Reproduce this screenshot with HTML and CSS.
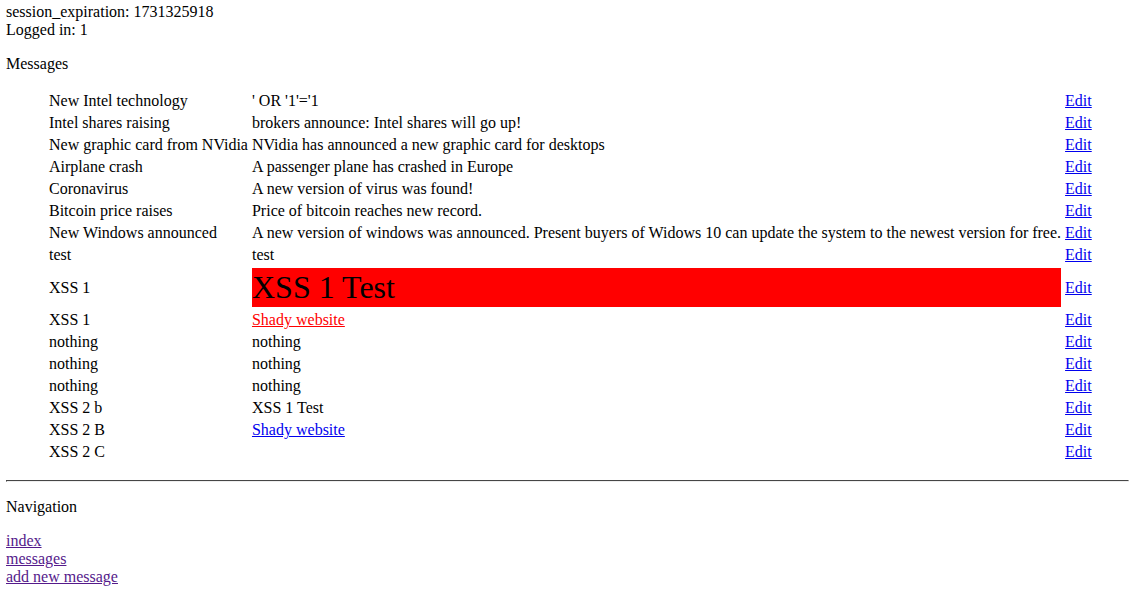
FILE: index.html
```html
<!DOCTYPE html>
<html>
<head>
<meta charset="utf-8">
<title>Messages</title>
<link rel="stylesheet" href="styles.css">
</head>
<body>
<div class="session">session_expiration: 1731325918<br>Logged in: 1</div>
<p class="heading">Messages</p>
<blockquote class="messages">
<table class="msg-table">
<tr><td>New Intel technology</td><td>' OR '1'='1</td><td><a href="#" class="edit">Edit</a></td></tr>
<tr><td>Intel shares raising</td><td>brokers announce: Intel shares will go up!</td><td><a href="#" class="edit">Edit</a></td></tr>
<tr><td>New graphic card from NVidia</td><td>NVidia has announced a new graphic card for desktops</td><td><a href="#" class="edit">Edit</a></td></tr>
<tr><td>Airplane crash</td><td>A passenger plane has crashed in Europe</td><td><a href="#" class="edit">Edit</a></td></tr>
<tr><td>Coronavirus</td><td>A new version of virus was found!</td><td><a href="#" class="edit">Edit</a></td></tr>
<tr><td>Bitcoin price raises</td><td>Price of bitcoin reaches new record.</td><td><a href="#" class="edit">Edit</a></td></tr>
<tr><td>New Windows announced</td><td>A new version of windows was announced. Present buyers of Widows 10 can update the system to the newest version for free.</td><td><a href="#" class="edit">Edit</a></td></tr>
<tr><td>test</td><td>test</td><td><a href="#" class="edit">Edit</a></td></tr>
<tr><td>XSS 1</td><td><div class="xss-big">XSS 1 Test</div></td><td><a href="#" class="edit">Edit</a></td></tr>
<tr><td>XSS 1</td><td><a href="#" class="shady-red">Shady website</a></td><td><a href="#" class="edit">Edit</a></td></tr>
<tr><td>nothing</td><td>nothing</td><td><a href="#" class="edit">Edit</a></td></tr>
<tr><td>nothing</td><td>nothing</td><td><a href="#" class="edit">Edit</a></td></tr>
<tr><td>nothing</td><td>nothing</td><td><a href="#" class="edit">Edit</a></td></tr>
<tr><td>XSS 2 b</td><td>XSS 1 Test</td><td><a href="#" class="edit">Edit</a></td></tr>
<tr><td>XSS 2 B</td><td><a href="#" class="shady">Shady website</a></td><td><a href="#" class="edit">Edit</a></td></tr>
<tr><td>XSS 2 C</td><td></td><td><a href="#" class="edit">Edit</a></td></tr>
</table>
</blockquote>
<hr class="divider">
<p class="heading">Navigation</p>
<div class="nav">
<a href="#" class="visited">index</a><br>
<a href="#" class="visited">messages</a><br>
<a href="#" class="visited">add new message</a>
</div>
</body>
</html>
```
FILE: styles.css
```css
html {
  font-family: "Liberation Serif", "Times New Roman", serif;
  font-size: 16px;
  color: #000;
  background: #fff;
}
body {
  margin: 3px 0 8px 6px;
}
.heading {
  margin: 16px 0;
}
.messages {
  margin: 16px 0 16px 40px;
}
.msg-table {
  border-spacing: 2px;
}
.msg-table td {
  padding: 1px;
  vertical-align: middle;
  white-space: nowrap;
}
a {
  color: #0000ee;
}
.edit {
  color: #0000ee;
}
.shady {
  color: #0000ee;
}
.shady-red {
  color: #ff0000;
}
.xss-big {
  background: #ff0000;
  font-size: 32px;
  line-height: 39px;
}
.divider {
  margin: 8px 0;
  border: 1px inset #eee;
  border-color: #9a9a9a #eee #eee #9a9a9a;
  height: 0;
}
.visited {
  color: #551a8b;
}
```
